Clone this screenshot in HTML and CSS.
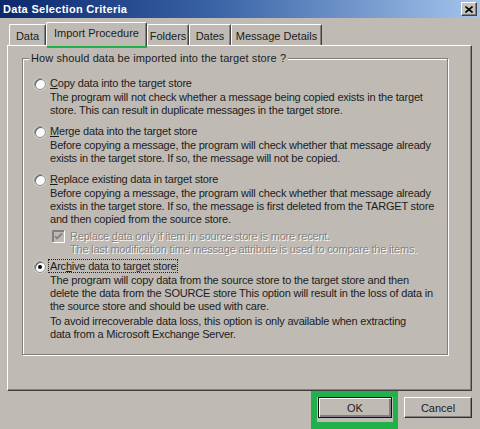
FILE: index.html
```html
<!DOCTYPE html>
<html>
<head>
<meta charset="utf-8">
<link rel="stylesheet" href="styles.css">
</head>
<body>
<div class="window">
  <div class="titlebar">
    <span class="title">Data Selection Criteria</span>
    <span class="close"><svg width="8" height="7" viewBox="0 0 8 7"><path d="M0.5 0.5 L7.5 6.5 M7.5 0.5 L0.5 6.5" stroke="#000" stroke-width="1.6"/></svg></span>
  </div>
  <div class="main">
    <div class="tabs">
      <div class="tab w-data">Data</div>
      <div class="tab sel w-import">Import Procedure</div>
      <div class="tab w-folders">Folders</div>
      <div class="tab w-dates">Dates</div>
      <div class="tab w-details">Message Details</div>
    </div>
    <div class="panel">
      <div class="group">
        <div class="legend">How should data be imported into the target store ?</div>
        <div class="option">
          <span class="radio"></span>
          <div class="body">
            <div class="otitle"><u>C</u>opy data into the target store</div>
            <div class="desc">The program will not check whether a message being copied exists in the target<br>store. This can result in duplicate messages in the target store.</div>
          </div>
        </div>
        <div class="option">
          <span class="radio"></span>
          <div class="body">
            <div class="otitle"><u>M</u>erge data into the target store</div>
            <div class="desc">Before copying a message, the program will check whether that message already<br>exists in the target store. If so, the message will not be copied.</div>
          </div>
        </div>
        <div class="option">
          <span class="radio"></span>
          <div class="body">
            <div class="otitle"><u>R</u>eplace existing data in target store</div>
            <div class="desc">Before copying a message, the program will check whether that message already<br>exists in the target store. If so, the message is first deleted from the TARGET store<br>and then copied from the source store.</div>
            <div class="check">
              <span class="cbox"><svg width="13" height="13" viewBox="0 0 13 13"><path d="M0.5 12.5 V0.5 H12.5" stroke="#808080" fill="none"/><path d="M1.5 12 V1.5 H12" stroke="#404040" fill="none" opacity="0.5"/><path d="M12.5 0.5 V12.5 H0.5" stroke="#ffffff" fill="none"/><path d="M3 6 L5 8.5 L10 3.5" stroke="#808080" stroke-width="1.8" fill="none"/></svg></span>
              <div class="disabled">Replace <u>d</u>ata only if item in source store is more recent.<br>The last modification time message attribute is used to compare the items.</div>
            </div>
          </div>
        </div>
        <div class="option">
          <span class="radio on"><span class="dot"></span></span>
          <div class="body">
            <div class="otitle"><span class="focus">Arc<u>h</u>ive data to target store</span></div>
            <div class="desc">The program will copy data from the source store to the target store and then<br>delete the data from the SOURCE store This option will result in the loss of data in<br>the source store and should be used with care.</div>
            <div class="desc p2">To avoid irrecoverable data loss, this option is only available when extracting<br>data from a Microsoft Exchange Server.</div>
          </div>
        </div>
      </div>
    </div>
    <div class="buttons">
      <div class="btn default">OK</div>
      <div class="btn cancel">Cancel</div>
    </div>
  </div>
  <div class="mark mark-tab"></div>
  <div class="mark mark-ok"></div>
</div>
</body>
</html>
```
FILE: styles.css
```css
* { box-sizing: border-box; }
html, body { margin: 0; padding: 0; }
body {
  width: 480px;
  height: 429px;
  overflow: hidden;
  background: #bfbbb4;
  font-family: "Liberation Sans", Arial, sans-serif;
  font-size: 11px;
  color: #1c1c1c;
}
.window { position: relative; width: 480px; height: 429px; }
.titlebar {
  height: 18px;
  display: flex;
  align-items: center;
  justify-content: space-between;
  padding: 0 3px 0 3px;
  background: linear-gradient(to right, #0c276c 0%, #3a64a6 45%, #a3c4ec 100%);
}
.title { color: #fff; font-weight: bold; font-size: 11px; letter-spacing: 0.3px; }
.close {
  width: 16px;
  height: 14px;
  background: #c6c2bb;
  border: 1px solid;
  border-color: #fff #404040 #404040 #fff;
  box-shadow: inset -1px -1px 0 #808080;
  display: flex;
  align-items: center;
  justify-content: center;
}
.main { padding: 4px 8px 0 7px; }
.tabs { display: flex; align-items: flex-end; height: 23px; padding-left: 2px; }
.tab {
  height: 21px;
  border-top: 1px solid #fff;
  border-left: 1px solid #fff;
  border-right: 1px solid #404040;
  border-radius: 2px 2px 0 0;
  box-shadow: inset -1px 0 0 #808080;
  display: flex;
  align-items: center;
  justify-content: center;
  padding-top: 1px;
  white-space: nowrap;
}
.tab.sel {
  height: 24px;
  margin-bottom: -1px;
  position: relative;
  z-index: 1;
  background: #bfbbb4;
  padding-top: 0;
  padding-bottom: 3px;
}
.w-data { width: 37px; }
.w-import { width: 101px; }
.w-folders { width: 42px; }
.w-dates { width: 42px; }
.w-details { width: 91px; }
.panel {
  width: 465px;
  height: 346px;
  border: 1px solid;
  border-color: #fff #404040 #404040 #fff;
  box-shadow: inset -1px -1px 0 #808080;
  padding: 12px 0 0 14px;
}
.group {
  position: relative;
  width: 426px;
  height: 297px;
  border: 1px solid #808080;
  box-shadow: inset 1px 1px 0 #fff, 1px 1px 0 #fff;
  padding: 18px 0 0 11px;
}
.legend {
  position: absolute;
  top: -7px;
  left: 6px;
  padding: 0 2px;
  background: #bfbbb4;
  line-height: 13px;
  letter-spacing: 0.1px;
}
.option { display: flex; align-items: flex-start; margin-bottom: 8px; line-height: 13px; letter-spacing: -0.2px; }
.radio {
  flex: none;
  width: 12px;
  height: 12px;
  margin: 1px 4px 0 0;
  border-radius: 50%;
  background: #fafafa;
  border: 1px solid #8a8a8a;
  box-shadow: inset 1px 1px 0 #606060, 0 0 0 0.5px #e8e8e8;
  display: flex;
  align-items: center;
  justify-content: center;
}
.dot { width: 4px; height: 4px; border-radius: 50%; background: #000; }
.body { width: 400px; white-space: nowrap; }
.desc { margin-top: 1px; }
.desc.p2 { margin-top: 2px; }
.focus { outline: 1px dotted #222; outline-offset: 0; padding: 0 1px; margin-left: -1px; }
.check { display: flex; margin: 4px 0 -4px 2px; }
.cbox { flex: none; width: 13px; height: 13px; margin: 0 5px 0 0; }
.cbox svg { display: block; }
.disabled { color: #838383; text-shadow: 1px 1px 0 #fff; }
.buttons { display: flex; justify-content: flex-end; gap: 12px; margin-top: 6px; }
.btn {
  height: 21px;
  display: flex;
  align-items: center;
  justify-content: center;
  border: 1px solid;
  border-color: #fff #303030 #303030 #fff;
  box-shadow: inset -1px -1px 0 #808080;
}
.btn.default {
  width: 74px;
  border: 1px solid #101010;
  box-shadow: inset 1px 1px 0 #fff, inset -2px -2px 0 #808080;
}
.btn.cancel { width: 68px; }
.mark { position: absolute; border: 4px solid #21b14b; }
.mark-tab { left: 47px; top: 24px; width: 100px; height: 24px; border-top-width: 3px; border-bottom-width: 3px; }
.mark-ok { left: 311px; top: 391px; width: 87px; height: 38px; border-width: 6px 5px 7px 6px; }
```
